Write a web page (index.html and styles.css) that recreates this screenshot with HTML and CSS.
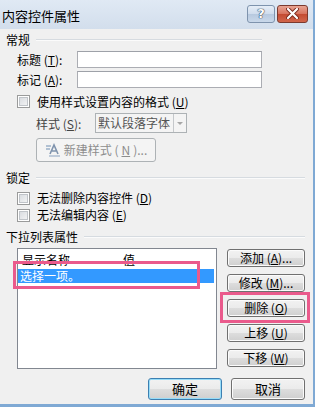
FILE: index.html
```html
<!DOCTYPE html>
<html lang="zh-CN">
<head>
  <meta charset="UTF-8" />
  <title>内容控件属性</title>
  <link rel="stylesheet" href="styles.css">
</head>
<body>
  <div class="dialog">
    <div class="titlebar">
      <span class="title">内容控件属性</span>
      <div class="caption-btns">
        <span class="cap-btn help">?</span>
        <span class="cap-btn close">
          <svg width="13" height="11" viewBox="0 0 13 11"><path d="M2 1 L11 10 M11 1 L2 10" stroke="#7a2a1d" stroke-width="4" stroke-linecap="round"/><path d="M2 1 L11 10 M11 1 L2 10" stroke="#fff" stroke-width="2.2" stroke-linecap="round"/></svg>
        </span>
      </div>
    </div>

    <div class="content">
      <div class="group-title short"><span>常规</span></div>
      <div class="field first">
        <label>标题 (<u>T</u>):</label>
        <span class="textbox"></span>
      </div>
      <div class="field">
        <label>标记 (<u>A</u>):</label>
        <span class="textbox"></span>
      </div>
      <div class="check check-u"><span class="box"></span>使用样式设置内容的格式 (<u>U</u>)</div>
      <div class="style-row">
        <label>样式 (<u>S</u>):</label>
        <span class="select">默认段落字体<span class="arrow"></span></span>
      </div>
      <div class="btn disabled new-style">
        <svg width="16" height="14" viewBox="0 0 16 14"><path d="M1 3 H6 M1 6 H5" stroke="#9bb0c8" stroke-width="1.5"/><path d="M5 11 L9 2 L13 11 M7 8 H11" stroke="#7f93ad" stroke-width="1.6" fill="none"/><path d="M4 13 H15" stroke="#9bb0c8" stroke-width="1.2"/></svg>
        新建样式 (<u>N</u>)...
      </div>

      <div class="group-title lock"><span>锁定</span></div>
      <div class="check check-d"><span class="box"></span>无法删除内容控件 (<u>D</u>)</div>
      <div class="check check-e"><span class="box"></span>无法编辑内容 (<u>E</u>)</div>

      <div class="group-title list-title"><span>下拉列表属性</span></div>
      <div class="list-area">
        <div class="listbox">
          <div class="list-head"><span class="col-name">显示名称</span><span>值</span></div>
          <div class="list-row selected">选择一项。</div>
        </div>
        <div class="side-btns">
          <span class="btn">添加 (<u>A</u>)...</span>
          <span class="btn">修改 (<u>M</u>)...</span>
          <span class="btn">删除 (<u>O</u>)</span>
          <span class="btn">上移 (<u>U</u>)</span>
          <span class="btn">下移 (<u>W</u>)</span>
        </div>
        <span class="mark mark-row"></span>
        <span class="mark mark-del"></span>
      </div>

      <div class="footer">
        <span class="btn default">确定</span>
        <span class="btn">取消</span>
      </div>
    </div>
  </div>
</body>
</html>
```

FILE: styles.css
```css
* { box-sizing: border-box; }
body {
  margin: 0;
  background: #fff;
  font-family: "Noto Sans CJK SC", "Noto Sans", sans-serif;
  font-size: 12px;
  color: #000;
}
u { text-decoration: underline; }

.dialog {
  width: 315px;
  border-right: 2px solid #7fa9d4;
  border-bottom: 3px solid #7fa9d4;
}

/* 标题栏 */
.titlebar {
  height: 29px;
  display: flex;
  align-items: center;
  justify-content: space-between;
  background: linear-gradient(#e0e9f4, #d2deec);
  padding: 0 5px 0 2px;
}
.title {
  font-size: 13px;
  line-height: 16px;
  margin-top: 2px;
}
.caption-btns {
  display: flex;
  gap: 2px;
  margin-top: -2px;
}
.cap-btn {
  height: 18px;
  border-radius: 3px;
  display: flex;
  align-items: center;
  justify-content: center;
}
.help {
  width: 28px;
  border: 1px solid #7e93ad;
  background: linear-gradient(#e6eef7 0%, #cfdced 50%, #b7c9df 51%, #c9d8ea 100%);
  color: #fff;
  font-family: "DejaVu Sans", sans-serif;
  font-weight: bold;
  font-size: 13px;
  line-height: 14px;
  text-shadow: 0 0 1px #2d3e55, 0 0 1px #2d3e55, 0 0 1px #2d3e55;
}
.close {
  width: 31px;
  border: 1px solid #7b3a2f;
  background: linear-gradient(#e8a493 0%, #d7725d 50%, #c44a31 51%, #d1664c 100%);
}

/* 内容区 */
.content {
  height: 375px;
  background: #f0f0f0;
  padding-top: 4px;
}
.group-title {
  display: flex;
  align-items: center;
  height: 14px;
  margin-left: 6px;
  width: 299px;
  line-height: 14px;
}
.group-title::after {
  content: "";
  flex: 1;
  margin-left: 6px;
  border-top: 1px solid #d6dbe0;
  border-bottom: 1px solid #fbfbfb;
}
.group-title.short { width: 256px; }
.group-title.lock { margin-top: 9px; }
.group-title.list-title { margin-top: 7px; }

.field {
  display: flex;
  align-items: center;
  height: 17px;
  margin-top: 3px;
  padding-left: 17px;
}
.field.first { margin-top: 4px; }
.field label { width: 60px; }
.textbox {
  width: 185px;
  height: 17px;
  background: #fff;
  border: 1px solid #abadb3;
  border-top-color: #9ea1a8;
}

.check {
  display: flex;
  align-items: center;
  height: 16px;
  padding-left: 17px;
  line-height: 16px;
}
.check-u { margin-top: 5px; height: 17px; }
.check-d { margin-top: 5px; }
.check-e { margin-top: 1px; }
.box {
  width: 13px;
  height: 13px;
  margin-right: 7px;
  border: 1px solid #9a9b9b;
  background: linear-gradient(135deg, #d3d7dc, #f8f8f8);
  box-shadow: inset 0 0 0 1px #fff, inset 0 0 0 2px #c0c4c9;
}

.style-row {
  display: flex;
  align-items: center;
  height: 20px;
  margin-top: 3px;
  padding-left: 36px;
}
.style-row label { width: 59px; color: #444; }
.select {
  position: relative;
  width: 92px;
  height: 20px;
  border: 1px solid #adb2b5;
  background: #f4f4f4;
  color: #555;
  line-height: 18px;
  padding-left: 2px;
  white-space: nowrap;
}
.arrow {
  position: absolute;
  top: 0;
  right: 0;
  width: 13px;
  height: 18px;
  border-left: 1px solid #c5c8cb;
  background: #f4f4f4;
}
.arrow::after {
  content: "";
  position: absolute;
  top: 8px;
  left: 3px;
  border-left: 3px solid transparent;
  border-right: 3px solid transparent;
  border-top: 3px solid #a6a6a6;
}

/* 按钮 */
.btn {
  display: flex;
  align-items: center;
  justify-content: center;
  height: 18px;
  border: 1px solid #707070;
  border-radius: 3px;
  background: linear-gradient(#f2f2f2 0%, #ebebeb 50%, #dddddd 51%, #cfcfcf 100%);
  box-shadow: inset 0 0 0 1px #fbfbfb;
  line-height: 16px;
}
.btn.disabled {
  border-color: #adb2b5;
  background: #f4f4f4;
  box-shadow: none;
  color: #8d8d8d;
}
.new-style {
  width: 120px;
  height: 24px;
  margin: 5px 0 0 36px;
  gap: 3px;
}
.btn.default {
  border-color: #3c7fb1;
  box-shadow: inset 0 0 0 1px #97dcf8;
}

/* 下拉列表 */
.list-area {
  position: relative;
  display: flex;
  gap: 10px;
  height: 121px;
  margin-top: 4px;
  padding-left: 17px;
}
.listbox {
  width: 200px;
  height: 121px;
  border: 1px solid #828790;
  background: #fff;
}
.list-head {
  display: flex;
  height: 20px;
  align-items: center;
  padding-left: 4px;
}
.col-name { width: 101px; }
.list-row {
  height: 14px;
  line-height: 14px;
  padding-left: 2px;
  margin-right: 2px;
}
.list-row.selected {
  background: #3399ff;
  color: #fff;
}
.side-btns {
  display: flex;
  flex-direction: column;
  gap: 7px;
  width: 78px;
  padding-top: 1px;
}
.mark {
  position: absolute;
  border: 3px solid #ea5a8c;
}
.mark-row {
  left: 13px;
  top: 13px;
  width: 187px;
  height: 28px;
}
.mark-del {
  left: 220px;
  top: 44px;
  width: 90px;
  height: 31px;
}

.footer {
  display: flex;
  gap: 9px;
  margin-top: 9px;
  padding-left: 148px;
}
.footer .btn {
  width: 74px;
  height: 22px;
  font-size: 13px;
}
```
